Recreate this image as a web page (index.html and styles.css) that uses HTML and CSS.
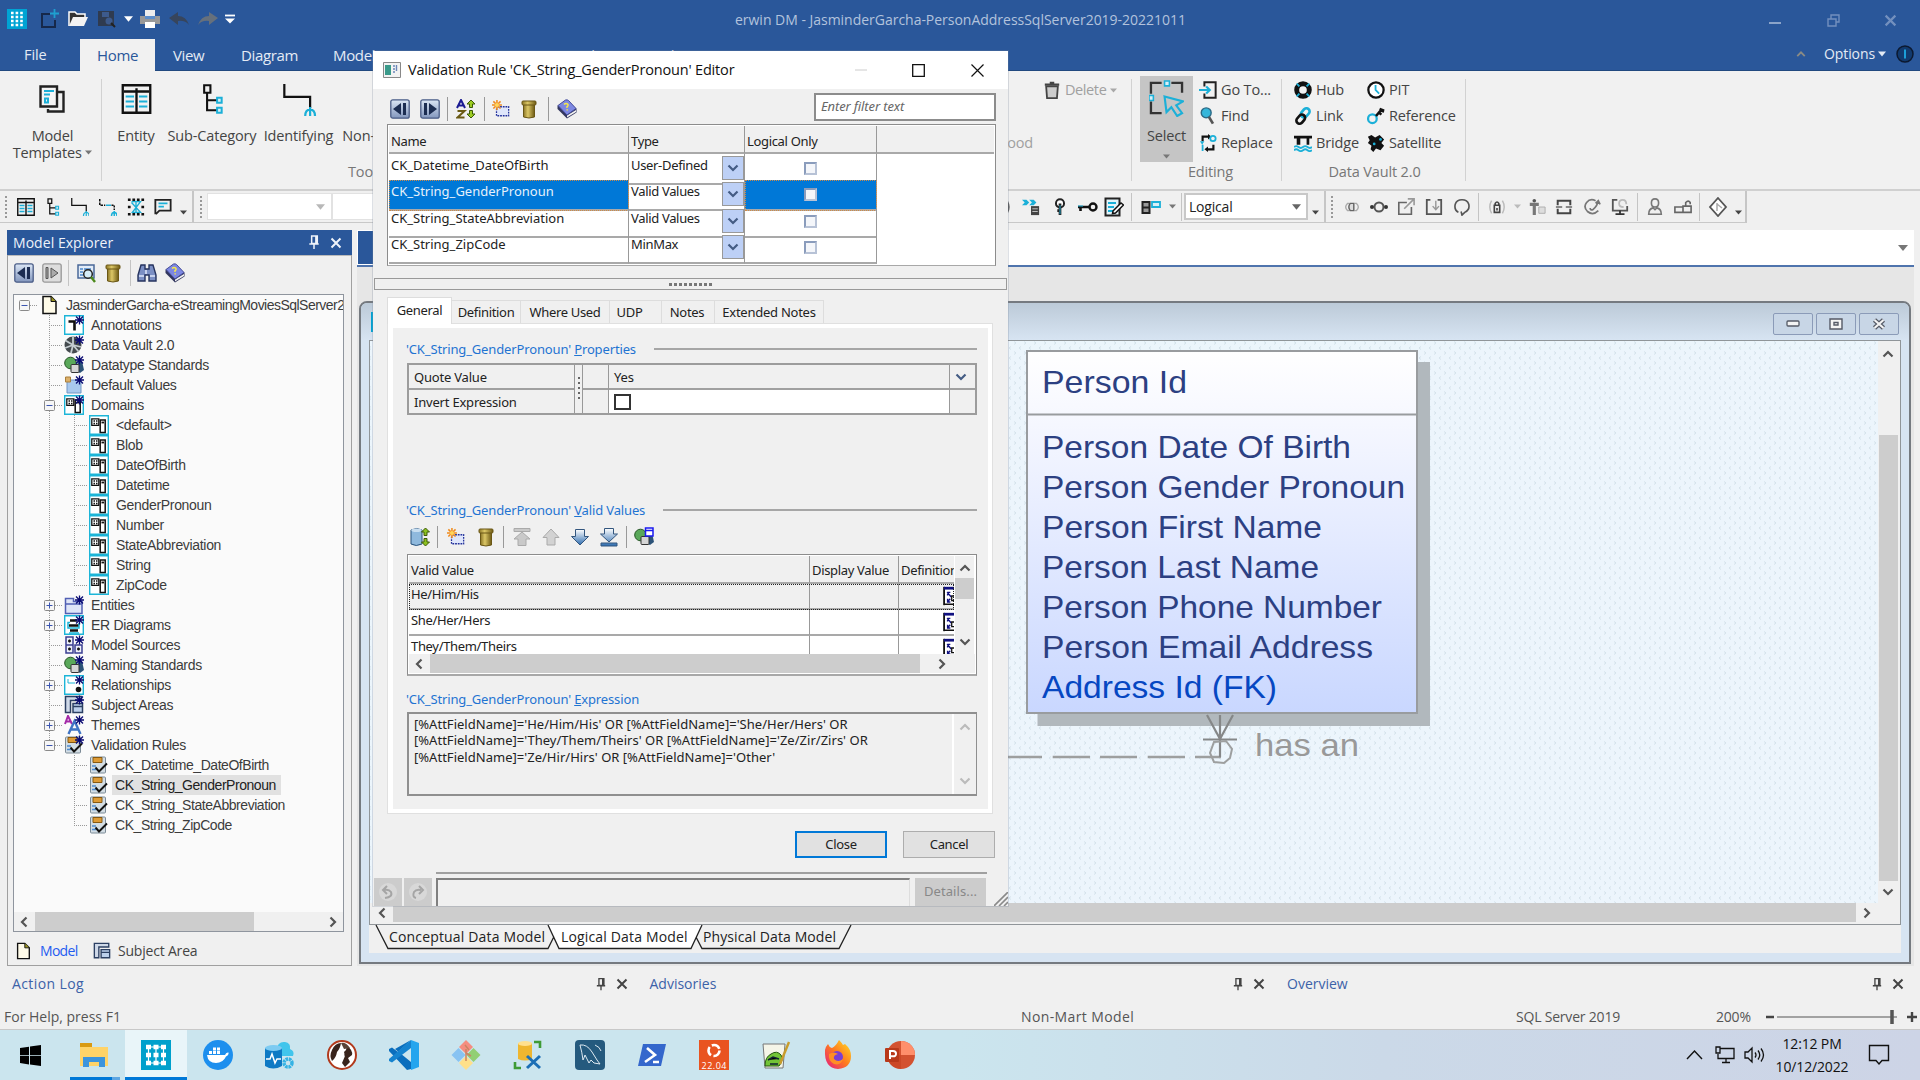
FILE: index.html
```html
<!DOCTYPE html>
<html lang="en">
<head>
<meta charset="utf-8">
<title>erwin DM</title>
<link rel="stylesheet" href="styles.css">
</head>
<body>
<svg class="defs" width="0" height="0">
  <defs>
    <linearGradient id="gBlue" x1="0" y1="0" x2="0" y2="1"><stop offset="0" stop-color="#dbe6f5"/><stop offset="1" stop-color="#8296bd"/></linearGradient>
    <linearGradient id="gGold" x1="0" y1="0" x2="1" y2="0"><stop offset="0" stop-color="#8a7526"/><stop offset=".4" stop-color="#dcc766"/><stop offset="1" stop-color="#6e5a14"/></linearGradient>
    <linearGradient id="gArrow" x1="0" y1="0" x2="0" y2="1"><stop offset="0" stop-color="#fff"/><stop offset="1" stop-color="#2d6caf"/></linearGradient>
    <linearGradient id="gFox" x1="1" y1="0" x2="0" y2="1"><stop offset="0" stop-color="#ffe226"/><stop offset=".5" stop-color="#ff7a1f"/><stop offset="1" stop-color="#e31587"/></linearGradient>
  </defs>
  <symbol id="logo" viewBox="0 0 20 20"><path fill="#00a3d4" d="M0 0h20v20H0z"/><path stroke="#fff" stroke-width="2.6" stroke-dasharray="2.6 2" d="M4 4h12.5M4 8h12.5M4 12h12.5M4 16h12.5"/></symbol>
  <symbol id="back" viewBox="0 0 20 20"><rect x=".8" y=".8" width="18.4" height="18.4" rx="2" fill="url(#gBlue)" stroke="#4a5c86" stroke-width="1.3"/><path d="M11 4v12L3 10zM13 4h3v12h-3z" fill="#1c2d52"/></symbol>
  <symbol id="fwd" viewBox="0 0 20 20"><rect x=".8" y=".8" width="18.4" height="18.4" rx="2" fill="url(#gBlue)" stroke="#4a5c86" stroke-width="1.3"/><path d="M9 4v12l8-6zM4 4h3v12H4z" fill="#1c2d52"/></symbol>
  <symbol id="fwdoff" viewBox="0 0 20 20"><rect x=".8" y=".8" width="18.4" height="18.4" rx="2" fill="#ddd" stroke="#999" stroke-width="1.3"/><path d="M9 5v10l7-5zM4 4.500h2v11H4z" fill="#aaa" stroke="#555"/></symbol>
  <symbol id="trash" viewBox="0 0 20 20"><path d="M4.500 5h11v13q-5.500 2-11 0z" fill="url(#gGold)" stroke="#6a5716"/><rect x="3" y="2" width="14" height="4" rx="1" fill="url(#gGold)" stroke="#6a5716"/></symbol>
  <symbol id="book" viewBox="0 0 20 20"><path d="M.5 6.500v3.500l9.500 9.500 9.500-6V9.500z" fill="#33375f"/><path d="m10 16.500 9-5.500v2l-9 5.500z" fill="#f2f2f2"/><path d="M1 6.500 8.500 1q2-.5 3 .5l7.500 8-9 6.500z" fill="#7d88e2" stroke="#454c98"/><path d="M7 5.500q2.200-2 4 0 .5 1.500-1 2.200v1.300M10.200 10.200v1.300" fill="none" stroke="#f7e84a" stroke-width="1.500"/></symbol>
  <symbol id="new" viewBox="0 0 20 20"><path d="M6 7.500h12.500v10H5v-8" fill="#dfe6fb" stroke="#23319c" stroke-width="1.400" stroke-dasharray="2 1"/><path d="M5.500 0v11M0 5.500h11M1.500 1.500l8 8M9.500 1.500l-8 8" stroke="#f08a1c" stroke-width="1.700"/><circle cx="5.500" cy="5.500" r="2.300" fill="#ffd65c"/></symbol>
  <symbol id="az" viewBox="0 0 20 20"><path d="M1 9 5 1l4 8M2.500 6.500h5" fill="none" stroke="#1b1b92" stroke-width="2"/><path d="M1.500 12h7l-7 6.500h7" fill="none" stroke="#6a5a14" stroke-width="2"/><path d="m15 1 4 4h-2.500v3.500h-3V5H11zM15 19l4-4h-2.500v-3.500h-3V15H11z" fill="#9dcc22" stroke="#3c5a08"/></symbol>
  <symbol id="db" viewBox="0 0 20 20"><path d="M1 3v14q5 3 11 0V3q-5-3-11 0z" fill="#8fb9dd" stroke="#28527c"/><ellipse cx="6.500" cy="3.300" rx="5.200" ry="1.800" fill="#c8def0"/><path d="m15.500 1 4 4H17v3.500h-3V5h-2.500zM15.500 19l4-4H17v-3.500h-3V15h-2.500z" fill="#8cc020" stroke="#3c5a08"/></symbol>
  <symbol id="top0" viewBox="0 0 20 20"><path d="M2 1.500h16v3H2zM10 5l8 7h-4v6.500H6V12H2z" fill="#c9c9c9" stroke="#aaa"/></symbol>
  <symbol id="up0" viewBox="0 0 20 20"><path d="m10 2 8 8.500h-4V18H6v-7.500H2z" fill="#d2d2d2" stroke="#aaa"/></symbol>
  <symbol id="down1" viewBox="0 0 20 20"><path d="m10 18-8.500-8.500h4V2.500h9v7h4z" fill="url(#gArrow)" stroke="#33567e"/></symbol>
  <symbol id="bot1" viewBox="0 0 20 20"><path d="m10 15-8.500-8h4V1.500h9V7h4zM2 16h16v3H2z" fill="url(#gArrow)" stroke="#33567e"/></symbol>
  <symbol id="shapes" viewBox="0 0 20 20"><circle cx="6.500" cy="8" r="5.800" fill="#5aa85a" stroke="#245524"/><path d="M14 6h4l2 9-4 3-4-2z" fill="#2c5378"/><rect x="7" y="9.500" width="8" height="8" rx="1" fill="#d5d5d5" stroke="#333"/></symbol>
  <symbol id="shapeswin" viewBox="0 0 20 20"><use href="#shapes"/><path d="M11.500 1h7.500v8h-7.500zM11.500 3.500H19" fill="#fff" stroke="#1a1af0" stroke-width="1.500"/></symbol>
  <symbol id="star" viewBox="0 0 20 20"><path d="M15.500.5v9M11 5h9M12 1.500l7 7M19 1.500l-7 7" stroke="#0a0a72" stroke-width="1.300"/></symbol>
  <symbol id="tAnn" viewBox="0 0 20 20"><path d="M.7.700h18.600v18.600H.700z" fill="#fff" stroke="#1cb5d8" stroke-width="1.400"/><path d="M4.500 6.500h6v9" fill="none" stroke="#111" stroke-width="2.600"/><use href="#star"/></symbol>
  <symbol id="tVault" viewBox="0 0 20 20"><circle cx="9" cy="10" r="8.500" fill="#444a4e"/><path d="M9 10 1.500 5.500M9 10V1.500M9 10l-8 3M9 10l-2 8M9 10l5.500 6.500M9 10l8 2" stroke="#c4ccd0" stroke-width="1.800"/><use href="#star"/></symbol>
  <symbol id="tShapes" viewBox="0 0 20 20"><use href="#shapes"/><use href="#star"/></symbol>
  <symbol id="tDef" viewBox="0 0 20 20"><path d="M3 5h14v13H3z" fill="#a9c9ee" stroke="#7196c4"/><path d="M1.500 2h5v5h-5z" fill="#dcb06a" stroke="#a97f3c"/><use href="#star"/></symbol>
  <symbol id="tDom" viewBox="0 0 20 20"><path d="M.7.700h18.600v18.600H.700z" fill="#fff" stroke="#1cb5d8" stroke-width="1.400"/><path d="M2.800 3.800h7v6.500h-7zM4.500 6h1.500M7 6h1.500M4.500 8.500h1.500M7 8.500h1.500" fill="none" stroke="#111" stroke-width="1.300"/><path d="M11.200 5h5v12.500h-5z" fill="#fff" stroke="#111" stroke-width="1.500"/><path d="M12.500 7.500h2.500" stroke="#111" stroke-width="1.800"/></symbol>
  <symbol id="tDoms" viewBox="0 0 20 20"><use href="#tDom"/><use href="#star"/></symbol>
  <symbol id="tEnt" viewBox="0 0 20 20"><path d="M1.500 3.500h8v3H18v12H1.500zM1.500 9H18" fill="#dfe5f8" stroke="#5260b4" stroke-width="1.500"/><use href="#star"/></symbol>
  <symbol id="tEr" viewBox="0 0 20 20"><path d="M.7.700h18.600v18.600H.700z" fill="#fff" stroke="#1cb5d8" stroke-width="1.400"/><path d="M6 5.500h7M5 10.500h10M6 15.500h8" stroke="#111" stroke-width="2.400"/><path d="M6 7.500H4V13h11v-5M5 18h10" fill="none" stroke="#1cb5d8" stroke-width="1.500"/><use href="#star"/></symbol>
  <symbol id="tSrc" viewBox="0 0 20 20"><path d="M2 2h7v8H2zM2 10h7v8H2zM11 10h7v8h-7z" fill="#eef0fa" stroke="#3b3f92" stroke-width="1.500"/><path d="M4 6h3M5.500 4.500v3M4 14h3M5.500 12.500v3M13 14h3M14.500 12.500v3" stroke="#111" stroke-width="1.500"/><use href="#star"/></symbol>
  <symbol id="tRel" viewBox="0 0 20 20"><path d="M.7.700h18.600v18.600H.700z" fill="#fff" stroke="#1cb5d8" stroke-width="1.400"/><path d="M4 4v4h7" fill="none" stroke="#1cb5d8"/><circle cx="14.500" cy="14.500" r="2.800" fill="#111"/><use href="#star"/></symbol>
  <symbol id="area" viewBox="0 0 20 20"><path d="M1.500 17.500v-16h16v4H6.500v12z" fill="#cfd9e8" stroke="#2c4063" stroke-width="1.500"/><path d="M9 8.500h9.500v9H9zM9 11.500h9.500" fill="#bcd0ec" stroke="#2c4063" stroke-width="1.500"/></symbol>
  <symbol id="tArea" viewBox="0 0 20 20"><use href="#area"/><use href="#star"/></symbol>
  <symbol id="tTheme" viewBox="0 0 20 20"><path d="m1 9 3-8 4 8M2 6.500h5" fill="none" stroke="#a32aa8" stroke-width="2"/><path d="m4.500 19 6-13 6 13M7 14.500h7.500" fill="none" stroke="#3f74c4" stroke-width="2.400"/><use href="#star"/></symbol>
  <symbol id="tVal" viewBox="0 0 20 20"><rect x="1.500" y="2" width="15" height="16" rx="1" fill="#d3dde4" stroke="#7b8a96"/><path d="M4 2.500h9v5H4z" fill="#dd9a35" stroke="#875a12"/><path d="M3 11h4M3 14.500h4" stroke="#4d8bd0" stroke-width="1.600"/><path d="m6.500 12.500 3.500 4 8-8" fill="none" stroke="#111" stroke-width="1.900"/></symbol>
  <symbol id="tVals" viewBox="0 0 20 20"><use href="#tVal"/><use href="#star"/></symbol>
  <symbol id="page" viewBox="0 0 20 20"><path d="M4 1.500h8l5 5v12H4z" fill="#fffbe8" stroke="#111" stroke-width="1.500"/><path d="M12 1.500v5h5" fill="#9a9420" stroke="#111"/></symbol>
  <symbol id="plus" viewBox="0 0 11 11"><rect x=".5" y=".5" width="10" height="10" rx="1" fill="#f6f6f6" stroke="#8a8a8a"/><path d="M2.500 5.500h6M5.500 2.500v6" stroke="#3c56b0"/></symbol>
  <symbol id="minus" viewBox="0 0 11 11"><rect x=".5" y=".5" width="10" height="10" rx="1" fill="#f6f6f6" stroke="#8a8a8a"/><path d="M2.500 5.500h6" stroke="#3c56b0"/></symbol>
  <symbol id="sheet" viewBox="0 0 20 20"><path d="M2 2h16v13H2z" fill="#e2ecf8" stroke="#4a6898" stroke-width="1.500"/><path d="M4 6h3M8 6h7M4 9h3M4 12h3" stroke="#4a86cc" stroke-width="1.500"/><circle cx="12" cy="11" r="4.300" fill="#d5ecf8" stroke="#222" stroke-width="1.500"/><path d="m15 14 4 5" stroke="#4c8a1c" stroke-width="2.400"/></symbol>
  <symbol id="binoc" viewBox="0 0 20 20"><path d="M4 2h4v4h4V2h4l3 10v6h-7v-6H8v6H1v-6z" fill="#7b8fc4" stroke="#26335e" stroke-width="1.400"/><path d="M2 13h5M13 13h5M9 7v4" stroke="#dfe7fa" stroke-width="1.500"/></symbol>
  <symbol id="entity" viewBox="0 0 36 36"><path d="M1.500 1.500h33v33h-33zM3 9h30M18 5v28" fill="none" stroke="#111" stroke-width="2.800"/><path d="M5 15h10M5 21h10M5 27h10M21 15h10M21 21h10M21 27h10" stroke="#1cb0d8" stroke-width="2.600"/></symbol>
  <symbol id="sub" viewBox="0 0 36 36"><path d="M8 1.500h7.500v9H8zM11.500 10.500v21H24M11.500 19.500H24" fill="none" stroke="#111" stroke-width="2.500"/><path d="M23.500 16.500H29v6h-5.500zM23.500 28.500H29v6h-5.500z" fill="#d8f0f8" stroke="#1cb0d8" stroke-width="2.400"/></symbol>
  <symbol id="ident" viewBox="0 0 36 36"><path d="M1.500 0v14.500h29V27" fill="none" stroke="#111" stroke-width="2.500"/><path d="M30.500 26v10M25 36q0-7 5.500-7.500Q36 29 36 36" fill="none" stroke="#1cb0d8" stroke-width="2.500"/></symbol>
  <symbol id="nonid" viewBox="0 0 36 36"><path d="M1.500 2v12.500h11" fill="none" stroke="#111" stroke-width="3" stroke-dasharray="5 2"/><path d="M14 14.500h10" stroke="#1cb0d8" stroke-width="3"/><path d="M25 14.500h5.500V24" fill="none" stroke="#111" stroke-width="3" stroke-dasharray="4 2"/><path d="M30.500 26v10M25 36q0-7 5.500-7.500Q36 29 36 36" fill="none" stroke="#1cb0d8" stroke-width="3"/></symbol>
  <symbol id="tmpl" viewBox="0 0 26 28"><path d="M19 7h5.500v19.500H9V24" fill="none" stroke="#222" stroke-width="2.400"/><path d="M1.500 1.500h16.500v20H1.500z" fill="#f5f5f5" stroke="#222" stroke-width="2.400"/><path d="M5 6h10M5 9.500h6M6 13.500h3v4H6z" fill="none" stroke="#1cb0d8" stroke-width="2"/></symbol>
  <symbol id="m2m" viewBox="0 0 20 20"><path d="M1 2h18M1 18h18M1 10h3M16 10h3" stroke="#111" stroke-width="2.800" stroke-dasharray="3 2"/><path d="M5 4h10L6 16h9L5 5M10 3v14" fill="none" stroke="#1cb0d8" stroke-width="1.500"/></symbol>
  <symbol id="note" viewBox="0 0 20 20"><path d="M1.500 18V2h17v12H6l-4 4" fill="none" stroke="#222" stroke-width="2"/><path d="M5 6h10M5 9.500h6" stroke="#1cb0d8" stroke-width="2"/></symbol>
  <symbol id="goto" viewBox="0 0 20 20"><path d="M6 6V1.500h12.500v17H6V14" fill="none" stroke="#222" stroke-width="2.200"/><path d="M0 10h11M8 6l4 4-4 4" fill="none" stroke="#1cb0d8" stroke-width="2.400"/></symbol>
  <symbol id="find" viewBox="0 0 20 20"><circle cx="8" cy="6.500" r="5.500" fill="#35b6da" stroke="#2b6a86" stroke-width="1.600"/><path d="m11 11 4.500 7.500" stroke="#555" stroke-width="3"/></symbol>
  <symbol id="repl" viewBox="0 0 20 20"><path d="M4 8V3h6M16 12v5h-6" fill="none" stroke="#111" stroke-width="2.400"/><path d="M10 0v6l4-3zM10 20v-6l-4 3z" fill="#111"/><path d="M1 8h5l-2.500 4zM3 12h2v7H3z" fill="#1cb0d8"/><circle cx="15.500" cy="5" r="3" fill="none" stroke="#1cb0d8" stroke-width="2"/></symbol>
  <symbol id="hub" viewBox="0 0 20 20"><circle cx="10" cy="10" r="7" fill="none" stroke="#111" stroke-width="5.500"/><path d="m3 3 3 3M17 3l-3 3M3 17l3-3M17 17l-3-3" stroke="#1cb0d8" stroke-width="2"/></symbol>
  <symbol id="link" viewBox="0 0 20 20"><rect x="9" y="1" width="7" height="11" rx="3.500" transform="rotate(40 12.500 6.500)" fill="none" stroke="#1cb0d8" stroke-width="3"/><rect x="4" y="8" width="7" height="11" rx="3.500" transform="rotate(40 7.500 13.500)" fill="none" stroke="#111" stroke-width="3"/></symbol>
  <symbol id="bridge" viewBox="0 0 20 20"><path d="M0 2h20v3h-3v7h-3V5H7v7H3V5H0z" fill="#111"/><path d="M0 14.500q2.500-2 5 0t5 0 5 0 5 0M0 18q2.500-2 5 0t5 0 5 0 5 0" fill="none" stroke="#1cb0d8" stroke-width="2"/></symbol>
  <symbol id="pit" viewBox="0 0 20 20"><circle cx="10" cy="10" r="8.500" fill="#fff" stroke="#111" stroke-width="2.500"/><path d="M9.500 4.500V10l4 4" fill="none" stroke="#1cb0d8" stroke-width="2"/></symbol>
  <symbol id="ref" viewBox="0 0 20 20"><circle cx="6" cy="13" r="4.800" fill="none" stroke="#1cb0d8" stroke-width="2.500"/><path d="M10 10 15 4l4 1M13 6l3 2.500M14 2l5 2" stroke="#111" stroke-width="2.800" fill="none"/></symbol>
  <symbol id="sat" viewBox="0 0 20 20"><path d="M1 3l4-2 4 3 5-3 5 5-3 4 3 3-4 5-5-2-3 4-3-3 1-4-4-3 2-3z" fill="#111"/><circle cx="8" cy="11" r="1.500" fill="#1cb0d8"/><circle cx="15" cy="6" r="1.500" fill="#1cb0d8"/></symbol>
  <symbol id="select" viewBox="0 0 36 38"><path d="M2 14V3h11M23 3h11v10M2 22v12h11" fill="none" stroke="#333" stroke-width="2.400"/><path d="M16 1h5v5h-5zM0 16h4.500v5H0z" fill="#d8f0f8" stroke="#1cb0d8" stroke-width="1.600"/><path d="m16 17 19 5-7 4 6 8-5 3-6-9-5 5z" fill="none" stroke="#1cb0d8" stroke-width="2.200"/></symbol>
  <symbol id="bin" viewBox="0 0 20 20"><path d="M3.500 6h13L15.500 19h-11z" fill="#ccc" stroke="#444" stroke-width="2"/><path d="M2 4h16M7.500 2h5" stroke="#444" stroke-width="2.600"/></symbol>
  <symbol id="pin" viewBox="0 0 12 16"><path d="M3.500 1h6v8h-6zM1 9.500h10M6 9.500V15M8 1v8" fill="none" stroke="currentColor" stroke-width="1.600"/></symbol>
  <symbol id="x" viewBox="0 0 12 12"><path d="m1.500 1.500 9 9M10.500 1.500l-9 9" fill="none" stroke="currentColor" stroke-width="2"/></symbol>
  <symbol id="chevL" viewBox="0 0 12 12"><path d="M8.500 1.500 4 6l4.500 4.500" fill="none" stroke="currentColor" stroke-width="2.200"/></symbol>
  <symbol id="chevR" viewBox="0 0 12 12"><path d="M3.500 1.500 8 6l-4.500 4.500" fill="none" stroke="currentColor" stroke-width="2.200"/></symbol>
  <symbol id="chevU" viewBox="0 0 12 12"><path d="M1.500 8.500 6 4l4.500 4.500" fill="none" stroke="currentColor" stroke-width="2.200"/></symbol>
  <symbol id="chevD" viewBox="0 0 12 12"><path d="M1.500 3.500 6 8l4.500-4.500" fill="none" stroke="currentColor" stroke-width="2.200"/></symbol>
  <symbol id="tri" viewBox="0 0 10 6"><path d="M0 0h10L5 6z" fill="currentColor"/></symbol>
  <symbol id="memo" viewBox="0 0 12 20"><path d="M1 0h11v20H1z" fill="#fff"/><path d="M1.200 0v20" stroke="#111" stroke-width="2"/><path d="M1 1.500h11" stroke="#101080" stroke-width="3"/><path d="m4.500 6 4.500 5M4.500 6H8M5 6v3.500M5 16l3-3M5 13v3.500h3" stroke="#101080" stroke-width="1.500" fill="none"/><path d="M12 10H9.500v5H12M1 19h11" stroke="#111" stroke-width="1.400" fill="none"/></symbol>
</svg>

<div class="app">
  <header class="titlebar">
    <div class="quick">
      <svg class="i20"><use href="#logo"/></svg>
      <svg class="i20" viewBox="0 0 20 20"><path d="M11 5H3v13h13v-7" fill="none" stroke="#16284a" stroke-width="2"/><path d="M15.500 0v9M11 4.500h9" stroke="#1f9fd0" stroke-width="1.800"/></svg>
      <svg class="i20" viewBox="0 0 20 20"><path d="M1 17V3h6l2 2h8v4" fill="#333" stroke="#fff" stroke-width="1.500"/><path d="M1 17 5 8h15l-4 9z" fill="#f3f3f3"/></svg>
      <svg class="i20" viewBox="0 0 20 20"><path d="M1 2h16v15H1z" fill="#2f3b50"/><path d="M5 3h7v5H5z" fill="#3d5a8c"/><circle cx="12" cy="12" r="3.500" fill="#3d5a8c"/><path d="m14 14 4 4" stroke="#222" stroke-width="2"/></svg>
      <svg class="i8 white"><use href="#tri"/></svg>
      <svg class="i20" viewBox="0 0 20 20"><path d="M5 1h10v6H5z" fill="#eee"/><path d="M0 7h20v8H0z" fill="#999"/><path d="M5 7h10v3H5z" fill="#5e8fcb"/><path d="M5 13h10v6H5z" fill="#fff"/></svg>
      <svg class="i20" viewBox="0 0 20 20"><path d="m0 9 9-6v4q8 0 11 9-4-5-11-4v4z" fill="#37455c"/></svg>
      <svg class="i20" viewBox="0 0 20 20"><path d="M20 9 11 3v4Q3 7 0 16q4-5 11-4v4z" fill="#66707c"/></svg>
      <svg class="i12 white" viewBox="0 0 12 12"><path d="M1 2.500h10" stroke="#fff" stroke-width="1.800"/><path d="M1 5.500h10l-5 5z" fill="#fff"/></svg>
    </div>
    <div class="app-title">erwin DM - JasminderGarcha-PersonAddressSqlServer2019-20221011</div>
    <div class="win-btns">
      <svg width="12" height="12" viewBox="0 0 12 12"><path d="M0 8h12" stroke="#8ba4c9" stroke-width="2"/></svg>
      <svg width="13" height="13" viewBox="0 0 13 13"><path d="M1 5h8v7H1zM4 5V1h8v7H9" fill="none" stroke="#7390be" stroke-width="1.400"/></svg>
      <svg width="13" height="13" class="pale"><use href="#x"/></svg>
    </div>
  </header>
  <nav class="tabs">
    <span class="tab file">File</span><span class="tab home">Home</span><span class="tab view">View</span><span class="tab diagram">Diagram</span><span class="tab model">Model</span><span class="tab mart">Mart</span><span class="tab actions">Actions</span><span class="tab tools">Tools</span><span class="tab help">Help</span>
    <span class="tab-right"><svg class="caret-up" viewBox="0 0 12 12"><use href="#chevU"/></svg>Options<svg class="i8"><use href="#tri"/></svg><svg class="info" viewBox="0 0 18 18"><circle cx="9" cy="9" r="8" fill="#123a6e" stroke="#0c1930" stroke-width="1.500"/><path d="M9 4.500v9" stroke="#1c9fd8" stroke-width="2"/></svg></span>
  </nav>

  <section class="ribbon">
    <div class="rg rg-model">
      <div class="big"><svg width="26" height="28"><use href="#tmpl"/></svg><span>Model<br>Templates <svg class="i6"><use href="#tri"/></svg></span></div>
    </div>
    <div class="rg rg-tools">
      <div class="tool w68"><svg class="i36"><use href="#entity"/></svg><span>Entity</span></div>
      <div class="tool w84"><svg class="i36"><use href="#sub"/></svg><span>Sub-Category</span></div>
      <div class="tool w90"><svg class="i38"><use href="#ident"/></svg><span>Identifying</span></div>
      <div class="tool wnon"><svg class="i36"><use href="#nonid"/></svg><span>Non-Identifying</span></div>
      <div class="rg-tools-name">Toolbox</div>
      <div class="right-items">
        <div class="cmd off del"><svg class="i18"><use href="#bin"/></svg>Delete <svg class="i6"><use href="#tri"/></svg></div>
        <div class="cmd off hood">Neighborhood</div>
      </div>
    </div>
    <div class="rg rg-edit">
      <div class="rg-body">
        <div class="select"><svg width="35" height="37"><use href="#select"/></svg><span>Select</span><svg class="i6"><use href="#tri"/></svg></div>
        <div class="cmds">
          <div class="cmd"><svg class="i18"><use href="#goto"/></svg>Go To...</div>
          <div class="cmd"><svg class="i18"><use href="#find"/></svg>Find</div>
          <div class="cmd"><svg class="i18"><use href="#repl"/></svg>Replace</div>
        </div>
      </div>
      <div class="rg-name">Editing</div>
    </div>
    <div class="rg rg-vault">
      <div class="rg-body">
        <div class="cmds c1">
          <div class="cmd"><svg class="i18"><use href="#hub"/></svg>Hub</div>
          <div class="cmd"><svg class="i18"><use href="#link"/></svg>Link</div>
          <div class="cmd"><svg class="i18"><use href="#bridge"/></svg>Bridge</div>
        </div>
        <div class="cmds">
          <div class="cmd"><svg class="i18"><use href="#pit"/></svg>PIT</div>
          <div class="cmd"><svg class="i18"><use href="#ref"/></svg>Reference</div>
          <div class="cmd"><svg class="i18"><use href="#sat"/></svg>Satellite</div>
        </div>
      </div>
      <div class="rg-name">Data Vault 2.0</div>
    </div>
  </section>

  <section class="strips">
    <div class="strip s1">
      <i class="grip"></i>
      <svg class="i18"><use href="#entity"/></svg><svg class="i18"><use href="#sub"/></svg><svg class="i18"><use href="#ident"/></svg><svg class="i18"><use href="#nonid"/></svg><svg class="i18"><use href="#m2m"/></svg><svg class="i18"><use href="#note"/></svg>
      <svg class="i6 low"><use href="#tri"/></svg>
    </div>
    <div class="strip s2">
      <i class="grip"></i>
      <div class="combo empty"><svg class="i8 pale2"><use href="#tri"/></svg></div>
      <div class="combo empty"></div>
      <span></span>
      <svg class="i18" viewBox="0 0 20 20"><path d="M4 4q-3 6 0 12M8 3v14M12 3v14M16 4q3 6 0 12" fill="none" stroke="#555" stroke-width="2"/></svg>
      <svg class="i18" viewBox="0 0 20 20"><path d="M0 2h5l3 3-3 3H0l3-3zM8 2h5l3 3-3 3H8l3-3z" fill="#1cb0d8"/><path d="M10 9h9v10h-9z" fill="#444"/><path d="M11.500 12h6M11.500 15h6" stroke="#ccc"/></svg>
      <svg class="i18" viewBox="0 0 20 20"><circle cx="10" cy="6" r="4.500" fill="#fff" stroke="#222" stroke-width="2.200"/><path d="M10 6v13M7 14h3" stroke="#222" stroke-width="3"/><path d="M10 8v10" stroke="#1cb0d8"/></svg>
      <svg class="i20" viewBox="0 0 20 20"><circle cx="15" cy="10" r="3.500" fill="none" stroke="#111" stroke-width="2.400"/><path d="M0 10h11M2.500 10v4" stroke="#111" stroke-width="2.600"/><path d="M0 9h5" stroke="#1cb0d8"/></svg>
      <svg class="i20" viewBox="0 0 20 20"><path d="M1.500 1.500h14v17h-14z" fill="#e4f5fa" stroke="#222" stroke-width="2"/><path d="M4 6h8M4 10h6M4 14h5" stroke="#1cb0d8" stroke-width="1.800"/><path d="m9 14 8-8 2.500 2-8 8-3 .5z" fill="#fff" stroke="#111" stroke-width="1.500"/></svg>
      <i class="sep"></i>
      <svg class="i20" viewBox="0 0 20 20"><path d="M1.500 5h7v11h-7zM1.500 10.500h7" fill="#999" stroke="#222" stroke-width="2"/><path d="M11 5h8v5h-8z" fill="#d8f0f8" stroke="#1cb0d8" stroke-width="1.800"/></svg>
      <svg class="i6 mid"><use href="#tri"/></svg>
      <i class="sep"></i>
      <div class="combo logical"><span>Logical</span><svg class="i8"><use href="#tri"/></svg></div>
      <svg class="i6 low"><use href="#tri"/></svg>
    </div>
    <div class="strip s3">
      <i class="grip"></i>
      <svg class="i18" viewBox="0 0 20 20"><path d="M7 6H5q-4 4 0 8h2M13 6h2q4 4 0 8h-2" fill="none" stroke="#aaa" stroke-width="1.500"/><path d="M8 6h4v8H8q-3-4 0-8z" fill="#ddd" stroke="#666" stroke-width="1.600"/></svg>
      <svg class="i20" viewBox="0 0 20 20"><circle cx="10" cy="10" r="4.500" fill="none" stroke="#555" stroke-width="2"/><circle cx="3" cy="10" r="2" fill="#333"/><circle cx="17" cy="10" r="2" fill="#333"/></svg>
      <svg class="i18" viewBox="0 0 20 20"><path d="M11 5H2v13h14v-8" fill="none" stroke="#666" stroke-width="1.800"/><path d="m8 12 11-11M12 1h7v7" fill="none" stroke="#999" stroke-width="1.800"/></svg>
      <svg class="i18" viewBox="0 0 20 20"><path d="M6 2H2v16h16V2h-4" fill="none" stroke="#555" stroke-width="2"/><path d="M12 3v9M8.500 9l3.500 4 3.500-4" fill="none" stroke="#999" stroke-width="1.600"/></svg>
      <svg class="i18" viewBox="0 0 20 20"><path d="M6 16q-5-3-3.500-9Q4 2 10 2t7.500 5Q19 13 13 16l-3 3-1-4" fill="none" stroke="#555" stroke-width="1.800"/></svg>
      <i class="sep"></i>
      <svg class="i18" viewBox="0 0 20 20"><path d="M4 3q-4 7 0 14M16 3q4 7 0 14" fill="none" stroke="#bbb" stroke-width="1.600"/><path d="M7 8h6v8H7zM8 8V6q2-3 4 0v2M10 11v3" fill="none" stroke="#444" stroke-width="1.800"/></svg>
      <svg class="i6 faint"><use href="#tri"/></svg>
      <svg class="i18" viewBox="0 0 20 20"><path d="M7 7v12M2 7h10" stroke="#777" stroke-width="3.500"/><circle cx="7" cy="3" r="2" fill="#555"/><path d="M12 10h7v7h-7z" fill="#ddd" stroke="#aaa"/></svg>
      <svg class="i18" viewBox="0 0 20 20"><path d="M3 8V3h14v5M3 12v5h14v-5" fill="none" stroke="#444" stroke-width="2.200"/><path d="M1 10h7M12 10h7" stroke="#888" stroke-width="2"/></svg>
      <svg class="i18" viewBox="0 0 20 20"><path d="M14 3Q8 0 4 5t1 10q6 5 12-1M8 11q0 3 3 2 5-4 6-10M14 6l3-3 2 4" fill="none" stroke="#777" stroke-width="1.900"/></svg>
      <svg class="i18" viewBox="0 0 20 20"><path d="M7 2H2v12h16V9" fill="none" stroke="#555" stroke-width="2"/><path d="M17 7q0-5-4-5t-4 4 5 4" fill="none" stroke="#bbb" stroke-width="2"/><path d="M5 18h10M10 14v4" stroke="#333" stroke-width="2"/></svg>
      <i class="sep"></i>
      <svg class="i18" viewBox="0 0 20 20"><path d="M10 1q4 0 4 4.500T10 10 6 5.500 10 1zM3 18q0-6 5-7l2 2 2-2q5 1 5 7z" fill="none" stroke="#777" stroke-width="1.800"/></svg>
      <svg class="i18" viewBox="0 0 20 20"><path d="M1 10h9v6H1zM10 9h9v7h-9zM13 9V5q3-3 5 0v2" fill="none" stroke="#666" stroke-width="1.800"/></svg>
      <i class="sep"></i>
      <svg class="i20" viewBox="0 0 20 20"><path d="m10 1 8 9-8 9-8-9z" fill="#fff" stroke="#555" stroke-width="1.800"/><path d="M9 6v8M9 7l5 4" stroke="#aaa" stroke-width="1.500"/></svg>
      <svg class="i6 low"><use href="#tri"/></svg>
    </div>
  </section>

  <main class="work">
    <aside class="explorer">
      <div class="ex-head"><span>Model Explorer</span><svg class="pin"><use href="#pin"/></svg><svg class="i12"><use href="#x"/></svg></div>
      <div class="ex-tools">
        <svg class="i20"><use href="#back"/></svg><svg class="i20"><use href="#fwdoff"/></svg><i class="sep"></i><svg class="i20"><use href="#sheet"/></svg><svg class="i20"><use href="#trash"/></svg><i class="sep"></i><svg class="i20"><use href="#binoc"/></svg><svg class="i22"><use href="#book"/></svg>
      </div>
      <div class="tree">
        <div class="rows">
          <div class="row"><i class="h"><svg><use href="#minus"/></svg></i><b><svg><use href="#page"/></svg></b><span class="rootname">JasminderGarcha-eStreamingMoviesSqlServer2019</span></div>
          <div class="row"><i></i><i class="v h"></i><b><svg><use href="#tAnn"/></svg></b><span>Annotations</span></div>
          <div class="row"><i></i><i class="v h"></i><b><svg><use href="#tVault"/></svg></b><span>Data Vault 2.0</span></div>
          <div class="row"><i></i><i class="v h"></i><b><svg><use href="#tShapes"/></svg></b><span>Datatype Standards</span></div>
          <div class="row"><i></i><i class="v h"></i><b><svg><use href="#tDef"/></svg></b><span>Default Values</span></div>
          <div class="row"><i></i><i class="v h"><svg><use href="#minus"/></svg></i><b><svg><use href="#tDoms"/></svg></b><span>Domains</span></div>
          <div class="row"><i></i><i class="v"></i><i class="v h"></i><b><svg><use href="#tDom"/></svg></b><span>&lt;default&gt;</span></div>
          <div class="row"><i></i><i class="v"></i><i class="v h"></i><b><svg><use href="#tDom"/></svg></b><span>Blob</span></div>
          <div class="row"><i></i><i class="v"></i><i class="v h"></i><b><svg><use href="#tDom"/></svg></b><span>DateOfBirth</span></div>
          <div class="row"><i></i><i class="v"></i><i class="v h"></i><b><svg><use href="#tDom"/></svg></b><span>Datetime</span></div>
          <div class="row"><i></i><i class="v"></i><i class="v h"></i><b><svg><use href="#tDom"/></svg></b><span>GenderPronoun</span></div>
          <div class="row"><i></i><i class="v"></i><i class="v h"></i><b><svg><use href="#tDom"/></svg></b><span>Number</span></div>
          <div class="row"><i></i><i class="v"></i><i class="v h"></i><b><svg><use href="#tDom"/></svg></b><span>StateAbbreviation</span></div>
          <div class="row"><i></i><i class="v"></i><i class="v h"></i><b><svg><use href="#tDom"/></svg></b><span>String</span></div>
          <div class="row"><i></i><i class="v"></i><i class="v h end"></i><b><svg><use href="#tDom"/></svg></b><span>ZipCode</span></div>
          <div class="row"><i></i><i class="v h"><svg><use href="#plus"/></svg></i><b><svg><use href="#tEnt"/></svg></b><span>Entities</span></div>
          <div class="row"><i></i><i class="v h"><svg><use href="#plus"/></svg></i><b><svg><use href="#tEr"/></svg></b><span>ER Diagrams</span></div>
          <div class="row"><i></i><i class="v h"></i><b><svg><use href="#tSrc"/></svg></b><span>Model Sources</span></div>
          <div class="row"><i></i><i class="v h"></i><b><svg><use href="#tShapes"/></svg></b><span>Naming Standards</span></div>
          <div class="row"><i></i><i class="v h"><svg><use href="#plus"/></svg></i><b><svg><use href="#tRel"/></svg></b><span>Relationships</span></div>
          <div class="row"><i></i><i class="v h"></i><b><svg><use href="#tArea"/></svg></b><span>Subject Areas</span></div>
          <div class="row"><i></i><i class="v h"><svg><use href="#plus"/></svg></i><b><svg><use href="#tTheme"/></svg></b><span>Themes</span></div>
          <div class="row"><i></i><i class="v h end"><svg><use href="#minus"/></svg></i><b><svg><use href="#tVals"/></svg></b><span>Validation Rules</span></div>
          <div class="row ck-row"><i></i><i></i><i class="v h"></i><b><svg><use href="#tVal"/></svg></b><span>CK_Datetime_DateOfBirth</span></div>
          <div class="row ck-row"><i></i><i></i><i class="v h"></i><b><svg><use href="#tVal"/></svg></b><span class="sel">CK_String_GenderPronoun</span></div>
          <div class="row ck-row"><i></i><i></i><i class="v h"></i><b><svg><use href="#tVal"/></svg></b><span>CK_String_StateAbbreviation</span></div>
          <div class="row ck-row"><i></i><i></i><i class="v h end"></i><b><svg><use href="#tVal"/></svg></b><span>CK_String_ZipCode</span></div>
        </div>
        <div class="hbar"><svg class="i12"><use href="#chevL"/></svg><div class="thumb"></div><svg class="i12"><use href="#chevR"/></svg></div>
      </div>
      <div class="ex-tabs"><svg class="i18"><use href="#page"/></svg><span class="on">Model</span><svg class="i18"><use href="#area"/></svg><span>Subject Area</span></div>
    </aside>

    <section class="desk">
      <div class="doc-bar"><div class="doc-tab"></div><svg class="i10"><use href="#tri"/></svg></div>
      <div class="mdi">
        <div class="mdi-head">
          <svg class="i20"><use href="#logo"/></svg>
          <div class="mdi-btns">
            <span><svg width="14" height="8" viewBox="0 0 14 8"><rect x="1" y="1" width="12" height="5" rx="1" fill="#f4f4f4" stroke="#555a66" stroke-width="1.300"/></svg></span>
            <span><svg width="14" height="12" viewBox="0 0 14 12"><path d="M1 1h12v10H1zM5 4.500h4v2.500H5z" fill="#f4f4f4" stroke="#555a66" stroke-width="1.400"/></svg></span>
            <span><svg width="14" height="12" viewBox="0 0 14 12"><path d="m2.500 2 9 8M11.500 2l-9 8" stroke="#555a66" stroke-width="4.600"/><path d="m2.500 2 9 8M11.500 2l-9 8" stroke="#f4f4f4" stroke-width="2.200"/></svg></span>
          </div>
        </div>
        <div class="mdi-body">
          <div class="canvas-row">
            <svg class="canvas" viewBox="370 341 1508 562">
              <defs>
                <pattern id="dots" width="10" height="10" patternUnits="userSpaceOnUse"><path d="m4 1.500 2 1.500-2 1.500M1 6.500l-2 1.500 2 1.500M11 6.500 9 8l2 1.500" fill="none" stroke="#d4e2ea" stroke-width="1"/></pattern>
                <linearGradient id="ent" x1="0" y1="0" x2="0" y2="1"><stop offset="0" stop-color="#fff"/><stop offset=".15" stop-color="#f8f9ff"/><stop offset="1" stop-color="#c9d7ff"/></linearGradient>
              </defs>
              <path fill="#ecf5fc" d="M370 341h1508v562H370z"/><path fill="url(#dots)" d="M370 341h1508v562H370z"/>
              <path fill="#b1b8bd" d="M1037.500 362H1430v364h-392.500z"/>
              <path fill="url(#ent)" stroke="#999c9f" stroke-width="2" d="M1027 351h390v362h-390zM1027 414.500h390"/>
              <g class="attrs">
                <text x="1042" y="393" textLength="145" lengthAdjust="spacingAndGlyphs">Person Id</text>
                <text x="1042" y="458" textLength="309" lengthAdjust="spacingAndGlyphs">Person Date Of Birth</text>
                <text x="1042" y="498" textLength="363" lengthAdjust="spacingAndGlyphs">Person Gender Pronoun</text>
                <text x="1042" y="538" textLength="280" lengthAdjust="spacingAndGlyphs">Person First Name</text>
                <text x="1042" y="578" textLength="277" lengthAdjust="spacingAndGlyphs">Person Last Name</text>
                <text x="1042" y="618" textLength="340" lengthAdjust="spacingAndGlyphs">Person Phone Number</text>
                <text x="1042" y="658" textLength="331" lengthAdjust="spacingAndGlyphs">Person Email Address</text>
                <text x="1042" y="698" textLength="235" lengthAdjust="spacingAndGlyphs" fill="#0647c2">Address Id (FK)</text>
              </g>
              <path d="M1008 757h34M1052.700 757H1090M1100 757h37M1147.700 757H1185M1195 757h26" stroke="#9d9f9f" stroke-width="2.400"/>
              <path d="M1220 715v42M1207 715l13 24 13-24M1203 739.500h34" fill="none" stroke="#858788" stroke-width="2.200"/>
              <path d="m1214 742 12-1 6 8-2 9-6 5-10-1-4-9z" fill="none" stroke="#9d9f9f" stroke-width="2"/>
              <text class="verb" x="1255" y="756" textLength="104" lengthAdjust="spacingAndGlyphs">has an</text>
            </svg>
            <div class="vbar"><svg class="i12"><use href="#chevU"/></svg><div class="thumb"></div><svg class="i12"><use href="#chevD"/></svg></div>
          </div>
          <div class="hbar big-h"><svg class="i12"><use href="#chevL"/></svg><div class="thumb"></div><svg class="i12"><use href="#chevR"/></svg></div>
        </div>
        <div class="model-tabs">
          <svg width="490" height="26" viewBox="370 925 490 26" class="tabshape"><path d="M549 926h154l-10 23H560z" fill="#fff"/><path d="M377 926l12 23.500h160l6-12M549 926l11 23.500h132l11-23.500M697 938l6 11.500h137l12-23.500" fill="none" stroke="#222" stroke-width="1.300"/></svg>
          <div class="model-names"><span class="mt1">Conceptual Data Model</span><span class="mt2">Logical Data Model</span><span class="mt3">Physical Data Model</span></div>
        </div>
      </div>
    </section>
  </main>

  <section class="docks">
    <div class="dock first"><span>Action Log</span><svg class="pin"><use href="#pin"/></svg><svg class="i12"><use href="#x"/></svg></div>
    <div class="dock"><span>Advisories</span><svg class="pin"><use href="#pin"/></svg><svg class="i12"><use href="#x"/></svg></div>
    <div class="dock"><span>Overview</span><svg class="pin"><use href="#pin"/></svg><svg class="i12"><use href="#x"/></svg></div>
  </section>
  <footer class="status"><span class="hint">For Help, press F1</span><span class="mart-state">Non-Mart Model</span><span>SQL Server 2019</span><span>200%</span>
    <svg width="154" height="20" viewBox="0 0 154 20"><path d="M1 10h8M142 10h10M147 5v10" stroke="#444" stroke-width="2.400"/><path d="M12 10h120" stroke="#888" stroke-width="1.500"/><path d="M127 3v14" stroke="#555" stroke-width="3.500"/></svg></footer>

  <div class="taskbar">
    <div class="tb"><svg width="21" height="21" viewBox="0 0 21 21"><path d="M0 3l9-1.300v8.500H0zM10 1.500 21 0v10.200H10zM0 11h9v8.500L0 18zM10 11h11v10l-11-1.500z"/></svg></div>
    <div class="tb run"><svg class="i30" viewBox="0 0 30 30"><path d="M1 3h12v6H1z" fill="#d99a12"/><path d="M1 7h28v19H1z" fill="#ffd368"/><path d="M4 27V17h22v10h-6v-5H10v5z" fill="#3c94dc"/></svg></div>
    <div class="tb active"><svg class="i30" viewBox="0 0 30 30"><path fill="#00a0cc" d="M0 0h30v30H0z"/><path stroke="#fff" stroke-width="4.600" stroke-dasharray="5 2.500" d="M5 7h20M5 15h20M5 23h20"/><path stroke="#fff" stroke-width="1.200" d="M7.500 7v16M15 7v16M22.500 7v16M5 7h20M5 23h20"/></svg></div>
    <div class="tb"><svg class="i30" viewBox="0 0 30 30"><circle cx="15" cy="15" r="15" fill="#1d8fee"/><path d="M4 15h18q1-3 3.500-2.500Q26 15 23 16.500 20 23 13 23q-8 0-9-8zM6 11h3v3H6zM10 11h3v3h-3zM14 11h3v3h-3zM10 7.500h3v3h-3zM14 7.500h3v3h-3z" fill="#fff"/></svg></div>
    <div class="tb"><svg class="i30" viewBox="0 0 30 30"><path d="M11 10q2-9 9-8 6 1 5 7 5 2 3 7H12z" fill="#41c5ec"/><path d="M0 8v18q8 5 17 0V8z" fill="#0d79c4"/><ellipse cx="8.500" cy="8" rx="8.500" ry="3" fill="#7dcbf2"/><path d="M1 19h4l2-5 3 9 2-4h4" fill="none" stroke="#fff" stroke-width="1.500"/><circle cx="23" cy="23" r="4" fill="none" stroke="#35b3e4" stroke-width="3.500" stroke-dasharray="2.500 .7"/></svg></div>
    <div class="tb"><svg class="i30" viewBox="0 0 30 30"><circle cx="15" cy="15" r="14" fill="#fff" stroke="#b23a1c" stroke-width="2"/><path d="M5 10Q8 3 14 3q-1 6-4 9-1 6-5 9-3-5 0-11zM20 6q6 4 5 9l-4 3 2 4-5 5-3-4 3-7-1-4 2-2z" fill="#38241c"/><path d="M14 3q5-1 9 5l-6 1z" fill="#5a4337"/><circle cx="20" cy="15" r="2.500" fill="#38241c"/></svg></div>
    <div class="tb"><svg class="i30" viewBox="0 0 30 30"><path d="m22 0 8 3v24l-8 3z" fill="#25a5ee"/><path d="M22 0 9 12 3 7.500 0 9v2l18 19 4-1V22L6 9z" fill="#0a6ebd"/><path d="M22 8 3 22.500 0 21v-2L22 0z" fill="#1583cf"/></svg></div>
    <div class="tb"><svg class="i30" viewBox="0 0 30 30"><path d="m15 0 7 7-7 7-7-7z" fill="#f58d80"/><path d="m7.500 8 7 7-7 7-7-7z" fill="#88c3f2"/><path d="m22.500 8 7 7-7 7-7-7z" fill="#92cf74"/><path d="m15 16 7 7-7 7-7-7z" fill="#ffe08a"/><path d="M14 5l4 5M15 9v12M15 13l5 3" stroke="#c98464" stroke-width="1.500"/></svg></div>
    <div class="tb"><svg class="i30" viewBox="0 0 30 30"><path d="M5 3v16q7 3 14 0V3z" fill="#efb62f"/><ellipse cx="12" cy="3.500" rx="7" ry="2.500" fill="#ffe08f"/><path d="M21 2h6v6M2 22v6h6" fill="none" stroke="#3e9b35" stroke-width="2.600"/><path d="m14 16 13 12M27 16 14 28" stroke="#1c6fb5" stroke-width="3"/></svg></div>
    <div class="tb"><svg class="i30" viewBox="0 0 30 30"><rect width="30" height="30" rx="4" fill="#255a7e"/><path d="M5 5q7-1 12 7l5 8 3 4-6-1-3-3-2 3-4-8q-1 3-2 5-1-8-3-15zM20 5q5 2 6 6" fill="none" stroke="#dfeaf2" stroke-width="1"/></svg></div>
    <div class="tb"><svg class="i30" viewBox="0 0 30 30"><path d="M6 4h23l-5 22H1z" fill="#3467cc"/><path d="m10 8 8 7-10 7M16 22h6" fill="none" stroke="#fff" stroke-width="2.600"/></svg></div>
    <div class="tb"><svg class="i30" viewBox="0 0 30 30"><path fill="#e95420" d="M0 0h30v30H0z"/><circle cx="15" cy="10.500" r="5.500" fill="none" stroke="#fff" stroke-width="2.600" stroke-dasharray="9 2.500"/><text x="2.500" y="28.500" fill="#fff" font-size="9" font-family="Open Sans, sans-serif" textLength="25">22.04</text></svg></div>
    <div class="tb"><svg class="i30" viewBox="0 0 30 30"><path d="M2 4h22l-2 24H4z" fill="#f5f5e8" stroke="#777"/><path d="M4 26q0-9 6-12 6-4 10 1 3 5-2 11z" fill="#72c437" stroke="#24580f"/><path d="m19 24 9-22" stroke="#c99d2c" stroke-width="2.400"/><path d="M7 20l5-3 6 2M9 24h8" stroke="#123" stroke-width="1.500"/></svg></div>
    <div class="tb"><svg class="i30" viewBox="0 0 30 30"><path d="M2 10q1-4 3-6 1 3 4 4 4-2 7-8 3 3 4 5l2-1q6 5 6 12 0 12-13 13Q1 28 2 10z" fill="url(#gFox)"/><circle cx="14" cy="17" r="6" fill="#7a3fd4"/><path d="M6 14q5-3 9 0-5 1-4 5 4 4 9 0-2 7-9 5-6-3-5-10z" fill="#ff8f24"/></svg></div>
    <div class="tb"><svg class="i30" viewBox="0 0 30 30"><circle cx="16" cy="15" r="14" fill="#d35230"/><path d="M16 1a14 14 0 0 1 14 14H16z" fill="#ff8f6b"/><path d="M2 15h14v14A14 14 0 0 1 2 15z" fill="#c43e1c" opacity=".5"/><rect x="0" y="8" width="14" height="14" rx="1" fill="#b8391a"/><path d="M5 19v-8h3q3 0 3 2.700T8 16.300H5" fill="none" stroke="#fff" stroke-width="2"/></svg></div>
    <div class="tray">
      <svg width="17" height="10" viewBox="0 0 17 10"><path d="m1 9 7.500-8L16 9" fill="none" stroke="#111" stroke-width="1.400"/></svg>
      <svg width="20" height="18" viewBox="0 0 20 18"><path d="M5 2.500h14v10H3V8M1 1h4v6H1zM11 12.500V16M7 16.500h8" fill="none" stroke="#111" stroke-width="1.300"/></svg>
      <svg width="22" height="18" viewBox="0 0 22 18"><path d="M1 6h3l4-4v14l-4-4H1zM11 6.500q2 2.500 0 5M14 4.500q3.500 4.500 0 9M17 2.500q5 6.500 0 13" fill="none" stroke="#111" stroke-width="1.300"/></svg>
      <div class="clock">12:12 PM<br>10/12/2022</div>
      <svg width="22" height="22" viewBox="0 0 22 22"><path d="M1.500 1.500h19v15H14L11 20l-3-3.500H1.500z" fill="none" stroke="#111" stroke-width="1.400"/></svg>
    </div>
  </div>
</div>

<div class="dialog">
  <div class="dl-head">
    <svg width="18" height="16" viewBox="0 0 18 16"><path d="M.5.500h17v15H.500z" fill="#f2f2f2" stroke="#888"/><path d="M2 3h6v10H2z" fill="#3a9a8a"/><path d="M10 4h2M10 7h2M13.500 3v6M10 10h2" stroke="#6a86b8" stroke-width="1.400"/></svg>
    <span>Validation Rule 'CK_String_GenderPronoun' Editor</span>
    <svg class="mn" width="12" height="12" viewBox="0 0 12 12"><path d="M0 6h12" stroke="#ccc"/></svg>
    <svg class="mx" width="13" height="13" viewBox="0 0 13 13"><path d="M.7.700h11.600v11.600H.700z" fill="none" stroke="#111" stroke-width="1.300"/></svg>
    <svg class="cl" width="13" height="13" viewBox="0 0 13 13"><path d="m.5.500 12 12M12.500.500l-12 12" stroke="#111" stroke-width="1.200"/></svg>
  </div>
  <div class="dl-tools">
    <svg class="i20"><use href="#back"/></svg><svg class="i20"><use href="#fwd"/></svg><i class="sep"></i><svg class="i20"><use href="#az"/></svg><i class="sep"></i><svg class="i18"><use href="#new"/></svg><svg class="i20"><use href="#trash"/></svg><i class="sep"></i><svg class="i20"><use href="#book"/></svg>
    <div class="filter">Enter filter text</div>
  </div>
  <div class="rules">
    <div class="rr rh"><span>Name</span><span>Type</span><span>Logical Only</span><span></span></div>
    <div class="rr"><span>CK_Datetime_DateOfBirth</span><span>User-Defined<em><svg class="i12"><use href="#chevD"/></svg></em></span><span class="ck"><u></u></span></div>
    <div class="rr hot"><span>CK_String_GenderPronoun</span><span>Valid Values<em><svg class="i12"><use href="#chevD"/></svg></em></span><span class="ck"><u></u></span></div>
    <div class="rr"><span>CK_String_StateAbbreviation</span><span>Valid Values<em><svg class="i12"><use href="#chevD"/></svg></em></span><span class="ck"><u></u></span></div>
    <div class="rr"><span>CK_String_ZipCode</span><span>MinMax<em><svg class="i12"><use href="#chevD"/></svg></em></span><span class="ck"><u></u></span></div>
  </div>
  <div class="splitter"><i></i></div>
  <div class="dl-tabs"><span class="on">General</span><span class="t2">Definition</span><span class="t3">Where Used</span><span class="t4">UDP</span><span class="t5">Notes</span><span class="t6">Extended Notes</span></div>
  <div class="pane">
    <div class="legend l1"><span>'CK_String_GenderPronoun' <u>P</u>roperties</span><hr></div>
    <div class="props">
      <div class="plabels"><span>Quote Value</span><span>Invert Expression</span></div>
      <div class="pgrip"><i></i></div>
      <div class="pnarrow"><span></span><span></span></div>
      <div class="pvals"><span class="gray">Yes</span><span><u></u></span></div>
      <div class="pbtn"><span><svg class="i12"><use href="#chevD"/></svg></span><span></span></div>
    </div>
    <div class="legend l2"><span>'CK_String_GenderPronoun' <u>V</u>alid Values</span><hr></div>
    <div class="vtools"><svg class="i20"><use href="#db"/></svg><i class="sep"></i><svg class="i18"><use href="#new"/></svg><svg class="i20"><use href="#trash"/></svg><i class="sep"></i><svg class="i20"><use href="#top0"/></svg><svg class="i20"><use href="#up0"/></svg><svg class="i20"><use href="#down1"/></svg><svg class="i20"><use href="#bot1"/></svg><i class="sep"></i><svg class="i20"><use href="#shapeswin"/></svg></div>
    <div class="values">
      <div class="vmain">
        <div class="vgrid">
          <div class="vr vh"><span>Valid Value</span><span>Display Value</span><span>Definition</span></div>
          <div class="vr cur"><span>He/Him/His</span><span></span><span class="m"><svg><use href="#memo"/></svg></span></div>
          <div class="vr"><span>She/Her/Hers</span><span></span><span class="m"><svg><use href="#memo"/></svg></span></div>
          <div class="vr"><span>They/Them/Theirs</span><span></span><span class="m"><svg><use href="#memo"/></svg></span></div>
        </div>
        <div class="vbar small"><svg class="i12"><use href="#chevU"/></svg><div class="thumb"></div><svg class="i12"><use href="#chevD"/></svg></div>
      </div>
      <div class="hbar vh-bar"><svg class="i12"><use href="#chevL"/></svg><div class="thumb"></div><svg class="i12"><use href="#chevR"/></svg></div>
    </div>
    <div class="legend l3"><span>'CK_String_GenderPronoun' <u>E</u>xpression</span></div>
    <div class="expr"><p>[%AttFieldName]='He/Him/His' OR [%AttFieldName]='She/Her/Hers' OR<br>[%AttFieldName]='They/Them/Theirs' OR [%AttFieldName]='Ze/Zir/Zirs' OR<br>[%AttFieldName]='Ze/Hir/Hirs' OR [%AttFieldName]='Other'</p>
      <div class="esc"><svg class="i12"><use href="#chevU"/></svg><svg class="i12"><use href="#chevD"/></svg></div></div>
  </div>
  <div class="dl-btns"><span class="primary">Close</span><span>Cancel</span></div>
  <div class="dl-foot">
    <div class="ur"><span><svg class="i20" viewBox="0 0 20 20"><circle cx="10" cy="10" r="9" fill="#d8d8d8"/><path d="M7 16q8-1 6-6-2-3-7-2M9 4 5 8l4 4" fill="none" stroke="#a5a5a5" stroke-width="2"/></svg></span><span><svg class="i20" viewBox="0 0 20 20"><circle cx="10" cy="10" r="9" fill="#d8d8d8"/><path d="M8 16q-4-1-2-6 2-3 7-2M11 4l4 4-4 4" fill="none" stroke="#a5a5a5" stroke-width="2"/></svg></span></div>
    <div class="msg"></div>
    <div class="det">Details...</div>
    <svg width="14" height="14" viewBox="0 0 14 14"><path d="M0 14 14 0M5 14l9-9M10 14l4-4" stroke="#8a8a8a" stroke-width="1.600"/></svg>
  </div>
</div>
</body>
</html>
```
FILE: styles.css
```css
* { box-sizing: border-box; }
html, body { margin: 0; width: 1920px; height: 1080px; overflow: hidden; }
body { position: relative; background: #f0f0f0; font: 14px/18px "Open Sans", "Noto Sans", sans-serif; color: #444; }
svg { display: block; flex: none; }
i, em { font-style: normal; }
.defs { position: absolute; }
.app { display: flex; flex-direction: column; width: 1920px; height: 1080px; }
.app > * { flex: none; }

.i6 { width: 7px; height: 5px; color: #777; }
.i8 { width: 9px; height: 6px; color: inherit; }
.i10 { width: 10px; height: 6px; }
.i12 { width: 12px; height: 12px; }
.i18 { width: 18px; height: 18px; }
.i20 { width: 20px; height: 20px; }
.i22 { width: 22px; height: 20px; }
.i30 { width: 30px; height: 30px; }
.i36 { width: 35px; height: 30px; }
.i38 { width: 38px; height: 32px; }
.white { color: #fff; }
.pale { color: #7390be; }
.sep { width: 1px; align-self: stretch; background: #c4c4c4; justify-self: center; }

/* title bar and ribbon tabs */
.titlebar { display: grid; grid-template-columns: 735px 1fr 185px; height: 38px; background: #2a579a; align-items: center; color: #b3c3dd; }
.quick { display: grid; grid-template-columns: 34px 29px 29px 29px 15px 28px 29px 29px 16px; align-items: center; justify-items: center; }
.app-title { font-size: 14px; letter-spacing: -.02px; padding-top: 1px; }
.win-btns { display: grid; grid-template-columns: 80px 36px 78px; align-items: center; justify-items: center; padding-top: 3px; }
.tabs { display: flex; height: 33px; background: #2a579a; color: #e4ebf5; line-height: 32px; border-bottom: 1px solid #21497f; font-size: 15px; letter-spacing: -.35px; }
.tab { flex: none; margin-top: 1px; }
.file { width: 80px; padding-left: 24px; font-size: 14.500px; letter-spacing: -.1px; }
.home { width: 75px; text-align: center; background: #f1f1f1; color: #2a579a; height: 32px; margin-bottom: -1px; }
.view { width: 86px; padding-left: 18px; }
.diagram { width: 92px; }
.model { width: 79px; }
.mart { width: 77px; }
.actions { width: 77px; }
.tools { width: 86px; }
.tab-right { flex: 1; display: flex; justify-content: flex-end; align-items: center; gap: 1px; font-size: 14px; padding-right: 6px; letter-spacing: -.1px; }
.tab-right .i8 { width: 8px; margin: 0 9px 0 2px; }
.caret-up { width: 10px; height: 10px; color: #8b8b84; margin-right: 17px; }
.info { width: 18px; height: 18px; }

/* ribbon */
.ribbon { display: flex; height: 120px; background: #f1f1f1; border-bottom: 2px solid #d0d0d0; font-size: 14.500px; letter-spacing: -.15px; }
.rg { position: relative; height: 102px; margin-top: 8px; border-right: 1px solid #d2d2d2; display: flex; }
.rg-model { width: 102px; justify-content: center; padding: 6px 0 0 4px; }
.big, .tool, .select { display: flex; flex-direction: column; align-items: center; text-align: center; white-space: nowrap; }
.big span { margin-top: 14px; line-height: 17px; }
.big span svg { display: inline-block; vertical-align: 3px; }
.rg-tools { width: 1030px; overflow: hidden; }
.tool { padding-top: 5px; }
.tool span { margin-top: 12px; line-height: 20px; }
.tool .i38 { margin-bottom: -2px; }
.w68 { width: 68px; }
.w84 { width: 84px; }
.w90 { width: 89px; }
.wnon { width: 101px; }
.rg-tools-name { margin-top: 84px; margin-left: -96px; color: #777; }
.right-items { margin-left: auto; width: 186px; padding: 0 10px 0 0; display: flex; flex-direction: column; margin-top: -2px; }
.cmd { display: flex; align-items: center; gap: 4px; height: 26.300px; line-height: 26px; white-space: nowrap; }
.off { color: #a0a0a0; }
.off .i6 { color: #a8a8a8; }
.del { margin-left: 98px; letter-spacing: -.4px; }
.hood { margin-top: 26.500px; width: 88px; justify-content: flex-end; }
.rg-body { display: flex; height: 84px; }
.rg-edit, .rg-vault { flex-direction: column; }
.rg-edit { width: 150px; padding-left: 8px; }
.rg-vault { width: 184px; padding-left: 12px; }
.c1 { width: 73px; }
.select { width: 53px; height: 86px; margin: -3px 6px 0 0; padding-top: 4px; background: #c5c5c5; }
.select span { margin: 10px 0 9px; }
.cmds { margin-top: -2px; }
.rg-name { text-align: center; color: #777; padding-top: 1px; }
.rg-vault .rg-name { padding-right: 10px; }

/* small toolbars */
.strips { display: flex; height: 33px; background: #f0f0f0; }
.strip { display: grid; height: 32px; align-items: center; justify-items: center; border-right: 2px solid #c6c6c6; border-bottom: 1px solid #c8c8c8; }
.s1 { width: 194px; grid-template-columns: 12px 27px 27px 28px 28px 27px 28px 13px; }
.s2 { width: 1132px; padding-left: 1px; grid-template-columns: 12px 125px 110px 546px 28px 30px 28px 28px 24px 11px 28px 14px 5px 124px 14px; }
.s3 { width: 421px; grid-template-columns: 12px 27px 28px 26px 29px 27px 7px 29px 12px 27px 28px 28px 28px 7px 28px 28px 5px 31px 10px; }
.grip { width: 5px; height: 24px; background: radial-gradient(circle, #999 0 .8px, transparent 1px) 0 0/4px 4px; }
.low { align-self: end; margin-bottom: 7px; color: #444; }
.mid { color: #777; }
.faint { color: #bbb; }
.strip .sep { height: 28px; align-self: center; }
.combo { width: 100%; height: 27px; background: #fff; display: flex; align-items: center; justify-content: flex-end; padding-right: 6px; border: 1px solid #e2e2e2; }
.pale2 { color: #b8b8b8; }
.logical { border: 2px solid #c8c8c8; justify-content: space-between; padding: 0 5px 0 3px; color: #222; letter-spacing: -.2px; }
.logical svg { color: #666; }

/* model explorer */
.work { display: flex; height: 742px; padding-top: 6px; }
.explorer { width: 345px; margin-left: 7px; height: 736px; display: flex; flex-direction: column; border: 1px solid #a0a0a0; border-top: 0; }
.explorer > * { flex: none; }
.ex-head { height: 25px; margin: 0 -1px; background: #2a579a; color: #eef3fa; display: flex; align-items: center; padding: 0 10px 0 6px; letter-spacing: .05px; }
.ex-head span { flex: 1; }
.pin { width: 12px; height: 15px; }
.ex-head .pin { margin-right: 10px; }
.ex-tools { height: 39px; border-top: 1px solid #bbb; display: grid; grid-template-columns: 31px 25px 8px 27px 28px 6px 28px 28px; align-items: center; justify-items: center; padding: 0 0 4px; }
.ex-tools .sep { height: 26px; align-self: center; }
.tree { margin-left: 5px; width: 331px; height: 638px; border: 1px solid #8f959e; background: #fafafa; display: flex; flex-direction: column; overflow: hidden; }
.rows { flex: 1; }
.row { display: flex; height: 20px; align-items: center; margin-left: -2px; font: 14px/20px "Liberation Sans", Arial, sans-serif; color: #3c3c3c; white-space: nowrap; letter-spacing: -.32px; }
.row > i { flex: none; width: 25px; height: 20px; display: grid; place-items: center; background-repeat: no-repeat; }
.row > i svg { width: 11px; height: 11px; }
.v { background-image: repeating-linear-gradient(#999 0 1px, transparent 1px 2px); background-size: 1px 100%; background-position: 12px 0; }
.h { background-image: repeating-linear-gradient(90deg, #999 0 1px, transparent 1px 2px); background-size: 13px 1px; background-position: 12px 10px; }
.v.h { background-image: repeating-linear-gradient(#999 0 1px, transparent 1px 2px), repeating-linear-gradient(90deg, #999 0 1px, transparent 1px 2px); background-size: 1px 100%, 13px 1px; background-position: 12px 0, 12px 10px; }
.v.h.end { background-size: 1px 10px, 13px 1px; }
.row > b { flex: none; width: 24px; margin-right: 1px; display: grid; place-items: center; }
.row > b svg { width: 20px; height: 20px; }
.row > span { padding: 0 4px 0 4px; }
.row .rootname { letter-spacing: -.52px; }
.ck-row { letter-spacing: -.45px; }
.ck-row > span { padding-left: 3px; }
.row .sel { background: #e1e1e1; color: #222; padding-right: 5px; }
.hbar { flex: none; height: 19px; display: flex; align-items: center; background: #f0f0f0; color: #555; }
.hbar .thumb, .vbar .thumb { background: #cdcdcd; }
.hbar .thumb { height: 100%; }
.tree .hbar svg { margin: 0 4px; }
.tree .hbar .thumb { width: 221px; margin: 0 69px 0 1px; }
.ex-tabs { display: flex; align-items: center; height: 34px; padding: 4px 0 0 6px; letter-spacing: -.2px; }
.ex-tabs .on { color: #1f5cf0; margin: 0 17px 0 8px; width: 36px; letter-spacing: -.7px; }
.ex-tabs svg + span:last-child { margin-left: 7px; }

/* document area */
.desk { margin-left: 5px; width: 1557px; height: 736px; background: #e6e6e6; }
.doc-bar { height: 37px; background: #fff; border-bottom: 2px solid #4f74ad; display: flex; justify-content: space-between; align-items: center; padding-right: 6px; color: #777; }
.doc-tab { width: 100px; height: 33px; margin-left: 1px; background: #2a579a; }
.mdi { margin: 34px 0 0 2px; width: 1552px; height: 663px; border: 2px solid #757a80; border-radius: 8px 8px 0 0; background: #d7e4f2; padding: 0 8px 9px; display: flex; flex-direction: column; }
.mdi > * { flex: none; }
.mdi-head { height: 37px; margin: 0 -8px; padding: 0 10px 0 10px; background: linear-gradient(#bccad8, #d7e4f2); border-radius: 6px 6px 0 0; display: flex; justify-content: space-between; align-items: center; }
.mdi-btns { display: flex; gap: 3px; margin-top: 5px; }
.mdi-btns span { width: 40px; height: 22px; border: 1px solid #8b9bb8; border-radius: 2px; display: grid; place-items: center; background: #c8d6e6; }
.mdi-body { height: 585px; border: 1px solid #909599; display: flex; flex-direction: column; background: #f0f0f0; }
.canvas-row { display: flex; height: 562px; }
.canvas { width: 1508px; height: 562px; }
.attrs text { font: 32px "Liberation Sans", Arial, sans-serif; fill: #2c4082; }
.attrs text[fill] { fill: #0647c2; }
.verb { font: 32px "Liberation Sans", Arial, sans-serif; fill: #999; }
.vbar { width: 20px; display: flex; flex-direction: column; align-items: center; color: #555; background: #f0f0f0; padding: 7px 0 5px; }
.vbar .thumb { width: 19px; height: 446px; margin: 75px 0 5px; }
.big-h { padding-left: 6px; }
.big-h .thumb { width: 1463px; margin: 0 5px; }
.model-tabs { position: relative; height: 28px; background: #f0f0f0; }
.model-names { position: relative; display: flex; height: 24px; line-height: 24px; color: #222; letter-spacing: .16px; white-space: nowrap; }
.tabshape { position: absolute; left: 0; top: -1px; }
.mt1 { margin-left: 20px; width: 172px; }
.mt2 { width: 142px; }
.mt3 { letter-spacing: .1px; }

/* docked panes and status bar */
.docks { display: flex; height: 36px; padding-left: 12px; color: #444; }
.dock { width: 637.500px; display: flex; align-items: center; padding-right: 22px; }
.dock span { flex: 1; color: #3c62a8; letter-spacing: 0; }
.dock.first span { letter-spacing: .4px; }
.dock .pin { width: 10px; margin-right: 10px; }
.dock:last-child { width: 617px; padding-right: 0; }
.status { display: grid; grid-template-columns: 1017px 495px 200px 49px 1fr; padding: 2px 0 0 4px; height: 28px; align-items: center; color: #555; border-bottom: 1px solid #c8c8c8; letter-spacing: -.2px; }
.hint { letter-spacing: 0; }
.mart-state { letter-spacing: .38px; }

/* taskbar */
.taskbar { display: flex; height: 50px; padding-left: 1px; background: linear-gradient(90deg, #cbe5ee 0 50%, #cbd9e8 72%, #cdd4e6); align-items: stretch; }
.tb { width: 62px; display: grid; place-items: center; }
.tb:first-child { padding-right: 3px; }
.tb.run { background: linear-gradient(90deg, transparent 7px, #0078d7 7px 49px, #5da6e2 49px 57px, transparent 57px) 0 100%/100% 3px no-repeat; }
.tb.active { background: linear-gradient(#0078d7, #0078d7) 0 100%/100% 3px no-repeat, #e9f5f9; }
.tray { margin-left: auto; width: 235px; display: grid; grid-template-columns: 18px 44px 16px 98px 36px; align-items: center; justify-items: center; color: #111; }
.clock { text-align: center; line-height: 23px; letter-spacing: -.15px; white-space: nowrap; }

/* validation rule editor */
.dialog { position: absolute; left: 373px; top: 51px; width: 635px; height: 855px; background: #f0f0f0; color: #222; font: 13px/16px "Noto Sans", "Open Sans", sans-serif; letter-spacing: -.33px; display: flex; flex-direction: column; box-shadow: 0 0 0 1px rgba(120,130,150,.25); }
.dialog > * { flex: none; }
.dl-head { height: 38px; background: #fff; display: flex; align-items: center; padding-left: 10px; color: #111; font: 14.500px/20px "Open Sans", sans-serif; letter-spacing: -.17px; }
.dl-head span { margin-left: 7px; width: 447px; white-space: nowrap; }
.mx { margin-left: 45px; }
.cl { margin-left: 46px; }
.dl-tools { display: grid; grid-template-columns: 30px 29px 7px 29px 9px 24px 31px 9px 28px; height: 35px; padding-top: 5px; margin-left: 12px; align-items: center; justify-items: center; position: relative; }
.dl-tools .sep { height: 24px; align-self: center; background: #999; }
.filter { position: absolute; right: 12px; top: 4px; width: 182px; height: 28px; background: #fff; border: 2px solid #8c8c8c; padding: 3px 5px; font-style: italic; color: #666; letter-spacing: -.12px; }
.rules { margin-left: 14px; width: 609px; height: 142px; border: 1px solid #8c8c8c; border-bottom-color: #a8a8a8; background: #fff; padding: 1px; }
.rr { display: grid; grid-template-columns: 240px 116px 132px; height: 26.300px; width: 488px; }
.rr > span { border-right: 1px solid #999; border-bottom: 2px solid #a9a9a9; padding: 3px 2px; display: flex; justify-content: space-between; white-space: nowrap; }
.rr:not(.rh) > span:first-child { letter-spacing: 0; }
.rh { grid-template-columns: 240px 116px 132px 1fr; height: 28px; width: 605px; background: #f0f0f0; }
.rh > span { padding-top: 7px; }
.rh > span:last-child { border-right: 0; }
.rr em { width: 22px; height: 24px; margin: -1px -2px 0 0; background: #bdd0f6; border: 1px solid #999; display: grid; place-items: center; color: #445c84; }
.rr .ck { justify-content: center; align-items: center; }
.ck u { width: 13px; height: 13px; background: #f4f6fa; border: 2px solid #8a9cbc; border-right-color: #b7c2d6; border-bottom-color: #b7c2d6; }
.hot > span:first-child, .hot > .ck { background: #0078d7; color: #e6f1fb; outline: 1px dotted #d08a45; outline-offset: -1px; }
.splitter { margin: 12px 1px 0; height: 12px; border: 1px solid #999; display: grid; place-items: center; }
.splitter i { width: 44px; height: 3px; background: repeating-linear-gradient(90deg, #777 0 3px, transparent 3px 5px); }
.dl-tabs { display: flex; align-items: flex-end; margin: 6px 0 0 14px; height: 27px; }
.dl-tabs span { height: 23px; border: 1px solid #ddd; border-left: 0; border-bottom: 0; text-align: center; line-height: 23px; white-space: nowrap; }
.dl-tabs .on { width: 65px; height: 27px; background: #fff; line-height: 24px; border: 1px solid #ddd; border-bottom: 0; position: relative; margin-bottom: -1px; }
.dl-tabs .t2 { width: 69px; } .dl-tabs .t3 { width: 89px; } .dl-tabs .t4 { width: 52px; padding-right: 12px; } .dl-tabs .t5 { width: 53px; padding-right: 2px; } .dl-tabs .t6 { width: 109px; letter-spacing: -.25px; }
.pane { margin-left: 14px; width: 606px; height: 491px; border: 1px solid #e0e0e0; background: linear-gradient(#f0f0f0, #f0f0f0) center/595px 481px no-repeat #fff; padding: 16px 15px 0 19px; }
.legend { display: flex; align-items: center; height: 18px; margin-left: -1px; color: #1f74d2; white-space: nowrap; letter-spacing: -.14px; }
.legend hr { height: 2px; border: 0; background: #a6a6a6; margin: 0; }
.l1 hr { width: 323px; margin-left: auto; } .l2 hr { width: 314px; margin-left: auto; }
.props { margin-top: 5px; width: 570px; height: 52px; border: 2px solid #9c9c9c; display: grid; grid-template-columns: 166px 8px 26px 341px 25px; background: #f0f0f0; }
.props > div { border-right: 1px solid #999; display: grid; grid-template-rows: 25px 1fr; }
.props > div > span { display: flex; align-items: center; padding-left: 5px; letter-spacing: -.2px; }
.props > div > span:first-child { border-bottom: 2px solid #a0a0a0; }
.props > .pgrip { display: flex; align-items: center; justify-content: center; }
.pgrip i { width: 2px; height: 24px; background: repeating-linear-gradient(#666 0 2px, transparent 2px 5px); }
.pvals > span:last-child { background: #fff; }
.pvals u { width: 17px; height: 16px; border: 2px solid #333; background: #fff; }
.props > .pbtn { border-right: 0; color: #445c84; }
.l2 { margin-top: 86px; }
.vtools { display: grid; height: 26px; margin-top: 5px; margin-left: -1px; align-items: center; justify-items: center; grid-template-columns: 28px 6px 31px 29px 7px 29px 29px 29px 29px 6px 30px; }
.vtools .sep { height: 22px; align-self: center; background: #999; }
.values { margin-top: 4px; width: 570px; height: 122px; border: 1px solid #8c8c8c; border-bottom: 2px solid #a8a8a8; padding: 1px; background: #fff; }
.vmain { display: flex; height: 98px; }
.vgrid { width: 545px; overflow: hidden; height: 98px; }
.vr { display: grid; grid-template-columns: 401px 89px 55px; height: 26px; }
.vr > span { border-right: 1px solid #999; border-bottom: 2px solid #a9a9a9; padding: 2px 2px; white-space: nowrap; overflow: hidden; }
.vr > span:last-child { border-right: 0; }
.vh { height: 28px; background: #f0f0f0; }
.vr.vh > span { padding-top: 6px; }
.vr.cur { background: #f0f0f0; outline: 1px dotted #222; outline-offset: -1px; }
.vr .m { display: flex; justify-content: flex-end; padding-right: 0; }
.m svg { width: 11px; height: 20px; }
.vbar.small { padding: 6px 0 4px; width: 19px; margin-left: 1px; }
.small .thumb { height: 21px; margin: 4px 0 37px; }
.vh-bar svg { margin: 0 4px 0 4px; }
.vh-bar .thumb { width: 490px; margin: 0 12px 0 1px; }
.l3 { margin-top: 14px; }
.expr { margin-top: 4px; width: 570px; height: 84px; border: 2px solid #8f8f8f; border-right-width: 1px; display: flex; justify-content: space-between; }
.expr p { margin: 2px 0 0 5px; line-height: 16.400px; white-space: nowrap; letter-spacing: .02px; }
.esc { width: 24px; border-left: 2px solid #fff; display: flex; flex-direction: column; justify-content: space-between; align-items: center; padding: 7px 0; color: #bbb; }
.dl-btns { display: flex; gap: 16px; justify-content: flex-end; padding-right: 13px; margin-top: 17px; height: 27px; }
.dl-btns span { width: 92px; height: 27px; border: 1px solid #adadad; background: #e1e1e1; text-align: center; line-height: 24px; }
.dl-btns .primary { border: 2px solid #0078d7; line-height: 22px; }
.dl-foot { display: flex; height: 35px; margin-top: 13px; align-items: flex-end; }
.ur { display: flex; gap: 2px; margin: 0 4px 0 1px; }
.ur span { width: 28px; height: 28px; background: #ccc; display: grid; place-items: center; }
.msg { width: 474px; height: 28px; border-top: 2px solid #808080; border-left: 2px solid #808080; border-right: 1px solid #ddd; position: relative; }
.msg::before { content: ""; position: absolute; left: -2px; top: -8px; width: 551px; height: 2px; background: #a0a0a0; }
.det { width: 71px; height: 28px; margin: 0 8px 0 5px; background: #ccc; color: #888; text-align: center; line-height: 27px; letter-spacing: .1px; }
```
